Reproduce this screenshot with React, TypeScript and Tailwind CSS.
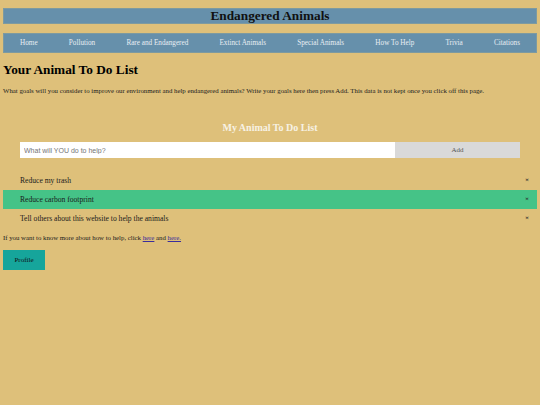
import React, { useState } from 'react';

const navItems = ['Home', 'Pollution', 'Rare and Endangered', 'Extinct Animals', 'Special Animals', 'How To Help', 'Trivia', 'Citations'];

interface Todo {
  id: number;
  text: string;
  done: boolean;
}

export default function App() {
  const [todos, setTodos] = useState<Todo[]>([
    { id: 1, text: 'Reduce my trash', done: false },
    { id: 2, text: 'Reduce carbon footprint', done: true },
    { id: 3, text: 'Tell others about this website to help the animals', done: false },
  ]);
  const [draft, setDraft] = useState('');

  const addTodo = () => {
    if (!draft.trim()) return;
    setTodos([...todos, { id: Date.now(), text: draft, done: false }]);
    setDraft('');
  };

  return (
    <div className="min-h-[405px] bg-[#dec07a] px-[3px] pt-[8px] text-black" style={{ fontFamily: '"Liberation Serif", serif' }}>
      <h1 className="h-[16px] bg-[#6690ab] border border-[#7d9aa0] text-center text-[13.3px] font-bold leading-[14px] text-[#111]">
        Endangered Animals
      </h1>

      <nav className="mt-[9px] flex h-[20px] items-center justify-between bg-[#6690ab] border border-[#7d9aa0] px-[16px]">
        {navItems.map((item) => (
          <a key={item} className="text-[7.2px] text-[#e8eef3]">{item}</a>
        ))}
      </nav>

      <h2 className="mt-[9px] text-[13.3px] font-bold leading-[16px]">Your Animal To Do List</h2>
      <p className="mt-[8px] text-[6.8px] leading-[9px] text-[#1a1a1a]">
        What goals will you consider to improve our environment and help endangered animals? Write your goals here then press Add. This data is not kept once you click off this page.
      </p>

      <div className="mt-[27px]">
        <h3 className="text-center text-[10px] font-bold leading-[12px] text-[#f7f2e4]">My Animal To Do List</h3>
        <div className="mx-[17px] mt-[8px] flex h-[16px]">
          <input
            value={draft}
            onChange={(e) => setDraft(e.target.value)}
            placeholder="What will YOU do to help?"
            className="h-full flex-1 bg-white px-[4px] text-[7px] text-[#555] placeholder-[#757575] outline-none"
            style={{ fontFamily: '"Liberation Sans", sans-serif' }}
          />
          <button onClick={addTodo} className="h-full w-[125px] bg-[#d9d9d9] text-[7px] text-[#555]">
            Add
          </button>
        </div>

        <ul className="mt-[13px]">
          {todos.map((todo) => (
            <li
              key={todo.id}
              onClick={() => setTodos(todos.map((t) => (t.id === todo.id ? { ...t, done: !t.done } : t)))}
              className={`flex h-[19px] items-center justify-between pl-[17px] pr-[8px] text-[7.6px] text-[#1a1a1a] ${todo.done ? 'bg-[#45c387]' : ''}`}
            >
              <span>{todo.text}</span>
              <button
                onClick={(e) => {
                  e.stopPropagation();
                  setTodos(todos.filter((t) => t.id !== todo.id));
                }}
                className="text-[7px] font-bold text-[#333]"
              >
                ×
              </button>
            </li>
          ))}
        </ul>
      </div>

      <p className="mt-[5px] text-[6.8px] leading-[9px] text-[#1a1a1a]">
        If you want to know more about how to help, click <a className="text-[#3a2d9c] underline">here</a> and <a className="text-[#3a2d9c] underline">here.</a>
      </p>

      <button className="mt-[8px] h-[20px] w-[42px] bg-[#16a59b] text-[7px] text-[#111]">Profile</button>
    </div>
  );
}
